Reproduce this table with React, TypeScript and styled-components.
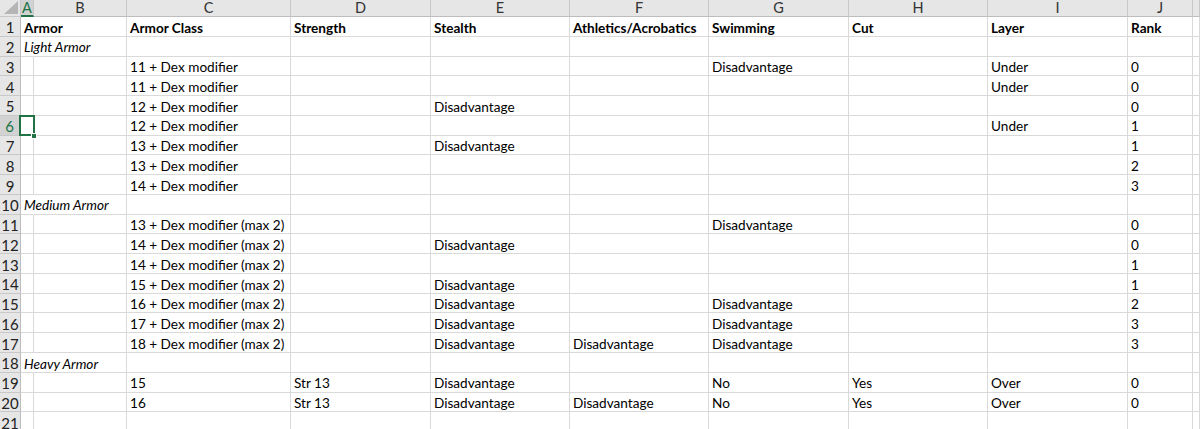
import React from "react";
import styled, { createGlobalStyle, css } from "styled-components";

const GREEN = "#217346";

const Global = createGlobalStyle`
  html, body { margin: 0; padding: 0; background: #fff; overflow: hidden; }
  body { font-family: Lato, "Liberation Sans", sans-serif; }
`;

const COLS = ["A", "B", "C", "D", "E", "F", "G", "H", "I", "J", "K"];

const Sheet = styled.div`
  display: grid;
  grid-template-columns: 21px 13px 93px 164px 140px 139px 139px 140px 139px 140px 65px 1fr;
  grid-template-rows: 17px;
  grid-auto-rows: 19.77px;
  width: 1200px;
  height: 429px;
  overflow: hidden;
  font-family: Lato, "Liberation Sans", sans-serif;
  font-size: 13.6px;
  color: #000;
`;

const Corner = styled.div`
  background: #e6e6e6;
  border-right: 1px solid #c8c8c8;
  border-bottom: 1px solid #c8c8c8;
  box-sizing: border-box;
  display: flex;
  align-items: flex-end;
  justify-content: flex-end;
  padding: 0 2px 2px 0;
`;

const ColHeader = styled.div<{ $active?: boolean }>`
  box-sizing: border-box;
  background: ${(p) => (p.$active ? "#d2d2d2" : "#e6e6e6")};
  border-right: 1px solid #c8c8c8;
  border-bottom: ${(p) => (p.$active ? `2px solid ${GREEN}` : "1px solid #bdbdbd")};
  color: ${(p) => (p.$active ? GREEN : "#333")};
  font-size: 14.5px;
  display: flex;
  align-items: center;
  justify-content: center;
  line-height: 1;
  padding-top: ${(p) => (p.$active ? "1px" : "0")};
`;

const RowHeader = styled.div<{ $active?: boolean }>`
  box-sizing: border-box;
  background: ${(p) => (p.$active ? "#d2d2d2" : "#e6e6e6")};
  border-right: ${(p) => (p.$active ? `2px solid ${GREEN}` : "1px solid #bdbdbd")};
  border-bottom: 1px solid #c8c8c8;
  color: ${(p) => (p.$active ? GREEN : "#222")};
  font-size: 15px;
  display: flex;
  align-items: center;
  justify-content: center;
  line-height: 1;
  padding-top: 3px;
`;

const Cell = styled.div<{ $bold?: boolean; $italic?: boolean; $overflow?: boolean; $selected?: boolean }>`
  position: relative;
  box-sizing: border-box;
  border-right: 1px solid ${(p) => (p.$overflow ? "transparent" : "#d9d9d9")};
  border-bottom: 1px solid #d9d9d9;
  padding: 4px 3px 0;
  display: flex;
  align-items: center;
  white-space: nowrap;
  overflow: ${(p) => (p.$overflow || p.$selected ? "visible" : "hidden")};
  font-weight: ${(p) => (p.$bold ? 700 : 400)};
  font-style: ${(p) => (p.$italic ? "italic" : "normal")};
  line-height: 1;
  z-index: ${(p) => (p.$selected ? 2 : p.$overflow ? 1 : 0)};
  ${(p) =>
    p.$selected &&
    css`
      &::before {
        content: "";
        position: absolute;
        left: -2px;
        top: -1px;
        right: -2px;
        bottom: -1px;
        border: 2px solid ${GREEN};
      }
      &::after {
        content: "";
        position: absolute;
        right: -4px;
        bottom: -4px;
        width: 4px;
        height: 4px;
        background: ${GREEN};
        border: 1px solid #fff;
      }
    `}
`;

const D = "Disadvantage";
const M = (n: number) => `${n} + Dex modifier (max 2)`;
const L = (n: number) => `${n} + Dex modifier`;

type Row = { kind?: "bold" | "italic"; c?: Record<string, string> };

const header: Record<string, string> = {
  A: "Armor",
  C: "Armor Class",
  D: "Strength",
  E: "Stealth",
  F: "Athletics/Acrobatics",
  G: "Swimming",
  H: "Cut",
  I: "Layer",
  J: "Rank",
};

const rows: Row[] = [
  { kind: "bold", c: header },
  { kind: "italic", c: { A: "Light Armor" } },
  { c: { C: L(11), G: D, I: "Under", J: "0" } },
  { c: { C: L(11), I: "Under", J: "0" } },
  { c: { C: L(12), E: D, J: "0" } },
  { c: { C: L(12), I: "Under", J: "1" } },
  { c: { C: L(13), E: D, J: "1" } },
  { c: { C: L(13), J: "2" } },
  { c: { C: L(14), J: "3" } },
  { kind: "italic", c: { A: "Medium Armor" } },
  { c: { C: M(13), G: D, J: "0" } },
  { c: { C: M(14), E: D, J: "0" } },
  { c: { C: M(14), J: "1" } },
  { c: { C: M(15), E: D, J: "1" } },
  { c: { C: M(16), E: D, G: D, J: "2" } },
  { c: { C: M(17), E: D, G: D, J: "3" } },
  { c: { C: M(18), E: D, F: D, G: D, J: "3" } },
  { kind: "italic", c: { A: "Heavy Armor" } },
  { c: { C: "15", D: "Str 13", E: D, G: "No", H: "Yes", I: "Over", J: "0" } },
  { c: { C: "16", D: "Str 13", E: D, F: D, G: "No", H: "Yes", I: "Over", J: "0" } },
  { c: {} },
];

const SEL_ROW = 6;
const SEL_COL = "A";

export default function App() {
  return (
    <>
      <Global />
      <Sheet>
        <Corner>
          <svg width="14" height="13" viewBox="0 0 14 13">
            <polygon points="14,0 14,13 0,13" fill="#b5b5b5" />
          </svg>
        </Corner>
        {COLS.map((c) => (
          <ColHeader key={c} $active={c === SEL_COL}>
            {c === "K" ? "" : c}
          </ColHeader>
        ))}
        {rows.map((r, i) => {
          const n = i + 1;
          const vals = r.c || {};
          return (
            <React.Fragment key={n}>
              <RowHeader $active={n === SEL_ROW}>{n}</RowHeader>
              {COLS.map((c) => {
                const v = vals[c];
                const overflow = c === "A" && !!v;
                return (
                  <Cell
                    key={c}
                    $bold={r.kind === "bold"}
                    $italic={r.kind === "italic"}
                    $overflow={overflow}
                    $selected={n === SEL_ROW && c === SEL_COL}
                  >
                    {v}
                  </Cell>
                );
              })}
            </React.Fragment>
          );
        })}
      </Sheet>
    </>
  );
}
